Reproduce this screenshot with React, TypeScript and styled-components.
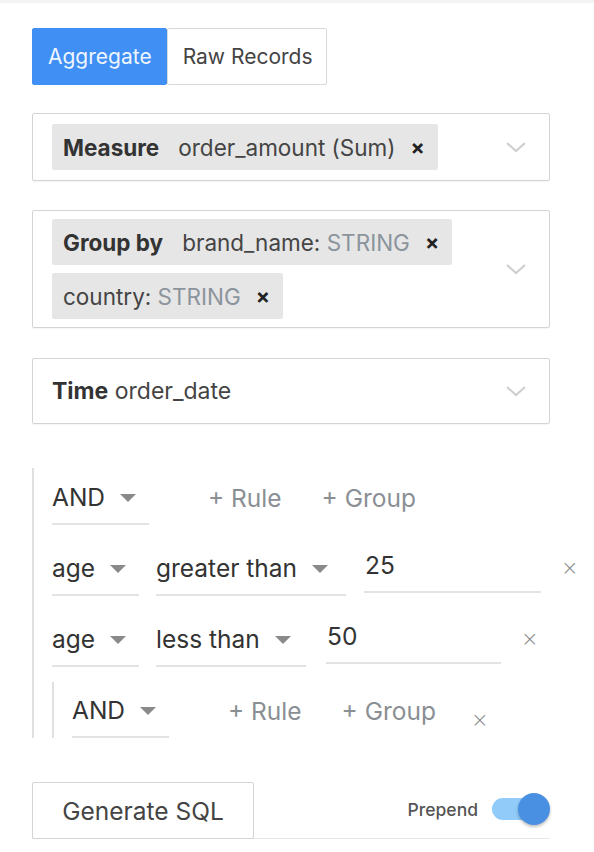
import React, {useState} from 'react';
import styled, {createGlobalStyle} from 'styled-components';

const GlobalStyle = createGlobalStyle`
  html, body {
    margin: 0;
    padding: 0;
    background: #fff;
  }
  body {
    font-family: Inter, "Noto Sans", "Liberation Sans", sans-serif;
    color: #333;
  }
`;

const Page = styled.div`
  width: 594px;
  height: 852px;
  box-sizing: border-box;
  border-top: 3px solid #f3f3f3;
  padding: 25px 0 0 32px;
  overflow: hidden;
`;

const ModeBar = styled.div`
  display: flex;
  margin-bottom: 28px;
`;

const ModeButton = styled.button<{$active?: boolean}>`
  height: 57px;
  padding: 0 14px 0 15px;
  font-family: inherit;
  font-size: 21px;
  border-radius: 2px;
  border: 1px solid ${p => (p.$active ? '#3f8ff5' : '#d9d9d9')};
  background: ${p => (p.$active ? '#3f8ff5' : '#fff')};
  color: ${p => (p.$active ? '#eef5ff' : '#444')};
  cursor: pointer;
`;

const SelectBox = styled.div<{$h: number; $mb: number}>`
  display: flex;
  align-items: center;
  gap: 12px;
  box-sizing: border-box;
  width: 518px;
  min-height: ${p => p.$h}px;
  padding: 8px 18px 8px 19px;
  border: 1px solid #d4d4d4;
  border-radius: 2px;
  margin-bottom: ${p => p.$mb}px;
  box-shadow: 0 1px 1px rgba(0, 0, 0, 0.04);
`;

const ChipList = styled.div`
  flex: 1;
  display: flex;
  flex-wrap: wrap;
  gap: 8px;
`;

const Chip = styled.div`
  display: flex;
  align-items: center;
  height: 46px;
  padding: 0 13px 0 11px;
  background: #e6e6e6;
  border-radius: 2px;
  font-size: 22.5px;
  color: #444;
  white-space: pre;
`;

const ChipLabel = styled.span`
  font-weight: 700;
  color: #333;
  margin-right: 19px;
`;

const TypeName = styled.span`
  color: #8b949c;
`;

const ChipClose = styled.span`
  margin-left: 15px;
  font-weight: 700;
  font-size: 21px;
  color: #222;
`;

const PlainValue = styled.div`
  flex: 1;
  font-size: 23px;
  color: #444;
  b {
    color: #333;
  }
`;

const Chevron = styled.svg`
  width: 22px;
  height: 12px;
  margin-right: 4px;
  flex-shrink: 0;
`;

const Builder = styled.div`
  box-sizing: border-box;
  height: 270px;
  overflow: hidden;
  border-left: 2px solid #e0e0e0;
  padding: 9px 0 0 18px;
  display: flex;
  flex-direction: column;
  gap: 23px;
`;

const NestedGroup = styled.div`
  margin-top: -8px;
  border-left: 2px solid #e0e0e0;
  padding: 8px 0 0 18px;
  display: flex;
  flex-direction: column;
  gap: 23px;
  flex-shrink: 0;
  min-height: 200px;
`;

const Row = styled.div`
  display: flex;
  align-items: flex-start;
  gap: 17px;
  flex-shrink: 0;
`;

const Select = styled.div<{$w: number}>`
  width: ${p => p.$w}px;
  height: 48px;
  box-sizing: border-box;
  padding-bottom: 6px;
  display: flex;
  align-items: center;
  gap: 15px;
  border-bottom: 2px solid #e3e3e3;
  font-size: 24.5px;
  color: #333;
  flex-shrink: 0;
`;

const Caret = styled.span`
  width: 0;
  height: 0;
  border-left: 8px solid transparent;
  border-right: 8px solid transparent;
  border-top: 8px solid #8a8a8a;
  margin-top: 2px;
`;

const ValueInput = styled.div<{$w: number; $ml?: number}>`
  width: ${p => p.$w}px;
  margin-left: ${p => p.$ml ?? 0}px;
  height: 45px;
  box-sizing: border-box;
  padding: 0 0 9px 1px;
  display: flex;
  align-items: center;
  border-bottom: 2px solid #e3e3e3;
  font-size: 24.5px;
  color: #333;
  flex-shrink: 0;
`;

const AddButton = styled.button<{$ml: number}>`
  margin-left: ${p => p.$ml}px;
  height: 42px;
  padding: 0;
  border: none;
  background: none;
  font-family: inherit;
  font-size: 24.5px;
  color: #8a8f94;
  cursor: pointer;
`;

const RemoveButton = styled.button<{$ml: number; $mt?: number}>`
  margin-left: ${p => p.$ml}px;
  margin-top: ${p => p.$mt ?? 10}px;
  padding: 0;
  border: none;
  background: none;
  font-family: "DejaVu Sans", sans-serif;
  font-size: 21px;
  font-weight: 300;
  color: #8a8a8a;
  line-height: 1;
  cursor: pointer;
`;

const Footer = styled.div`
  margin-top: 44px;
  width: 518px;
  display: flex;
  align-items: center;
  justify-content: space-between;
  border-bottom: 1px solid #e8e8e8;
`;

const GenerateButton = styled.button`
  width: 222px;
  height: 57px;
  background: #fff;
  border: 1px solid #d4d4d4;
  border-radius: 2px;
  font-family: inherit;
  font-size: 24.5px;
  color: #444;
  cursor: pointer;
  margin-bottom: -1px;
`;

const SwitchWrap = styled.label`
  display: flex;
  align-items: center;
  gap: 14px;
  font-size: 17.5px;
  font-weight: 500;
  color: #555;
  margin-top: -2px;
  margin-right: 9px;
`;

const Track = styled.span<{$on: boolean}>`
  position: relative;
  width: 49px;
  height: 22px;
  border-radius: 11px;
  background: ${p => (p.$on ? '#90cbf9' : '#ccc')};
`;

const Thumb = styled.span<{$on: boolean}>`
  position: absolute;
  top: -5px;
  left: ${p => (p.$on ? '26px' : '-6px')};
  width: 32px;
  height: 32px;
  border-radius: 50%;
  background: ${p => (p.$on ? '#4a90e2' : '#fafafa')};
  box-shadow: 0 2px 3px rgba(0, 0, 0, 0.25);
`;

const ChevronIcon = () => (
  <Chevron viewBox="0 0 22 12">
    <path d="M2 2 L11 10 L20 2" fill="none" stroke="#cfcfcf" strokeWidth="2.2" />
  </Chevron>
);

const App: React.FC = () => {
  const [mode, setMode] = useState('aggregate');
  const [prepend, setPrepend] = useState(true);

  return (
    <>
      <GlobalStyle />
      <Page>
        <ModeBar>
          <ModeButton $active={mode === 'aggregate'} onClick={() => setMode('aggregate')}>
            Aggregate
          </ModeButton>
          <ModeButton $active={mode === 'raw'} onClick={() => setMode('raw')}>
            Raw Records
          </ModeButton>
        </ModeBar>

        <SelectBox $h={68} $mb={29}>
          <ChipList>
            <Chip>
              <ChipLabel>Measure</ChipLabel>
              order_amount (Sum)
              <ChipClose>×</ChipClose>
            </Chip>
          </ChipList>
          <ChevronIcon />
        </SelectBox>

        <SelectBox $h={118} $mb={30}>
          <ChipList>
            <Chip>
              <ChipLabel>Group by</ChipLabel>
              brand_name: <TypeName>STRING</TypeName>
              <ChipClose>×</ChipClose>
            </Chip>
            <Chip>
              country: <TypeName>STRING</TypeName>
              <ChipClose>×</ChipClose>
            </Chip>
          </ChipList>
          <ChevronIcon />
        </SelectBox>

        <SelectBox $h={66} $mb={44}>
          <PlainValue>
            <b>Time</b> order_date
          </PlainValue>
          <ChevronIcon />
        </SelectBox>

        <Builder>
          <Row>
            <Select $w={97}>AND<Caret /></Select>
            <AddButton $ml={42}>+ Rule</AddButton>
            <AddButton $ml={23}>+ Group</AddButton>
          </Row>
          <Row>
            <Select $w={87}>age<Caret /></Select>
            <Select $w={190}>greater than<Caret /></Select>
            <ValueInput $w={177} $ml={1}>25</ValueInput>
            <RemoveButton $ml={3}>×</RemoveButton>
          </Row>
          <Row>
            <Select $w={87}>age<Caret /></Select>
            <Select $w={150}>less than<Caret /></Select>
            <ValueInput $w={175} $ml={3}>50</ValueInput>
            <RemoveButton $ml={3}>×</RemoveButton>
          </Row>
          <NestedGroup>
            <Row>
              <Select $w={97}>AND<Caret /></Select>
              <AddButton $ml={42}>+ Rule</AddButton>
              <AddButton $ml={23}>+ Group</AddButton>
              <RemoveButton $ml={18} $mt={20}>×</RemoveButton>
            </Row>
          </NestedGroup>
        </Builder>

        <Footer>
          <GenerateButton>Generate SQL</GenerateButton>
          <SwitchWrap onClick={() => setPrepend(!prepend)}>
            Prepend
            <Track $on={prepend}>
              <Thumb $on={prepend} />
            </Track>
          </SwitchWrap>
        </Footer>
      </Page>
    </>
  );
};

export default App;
